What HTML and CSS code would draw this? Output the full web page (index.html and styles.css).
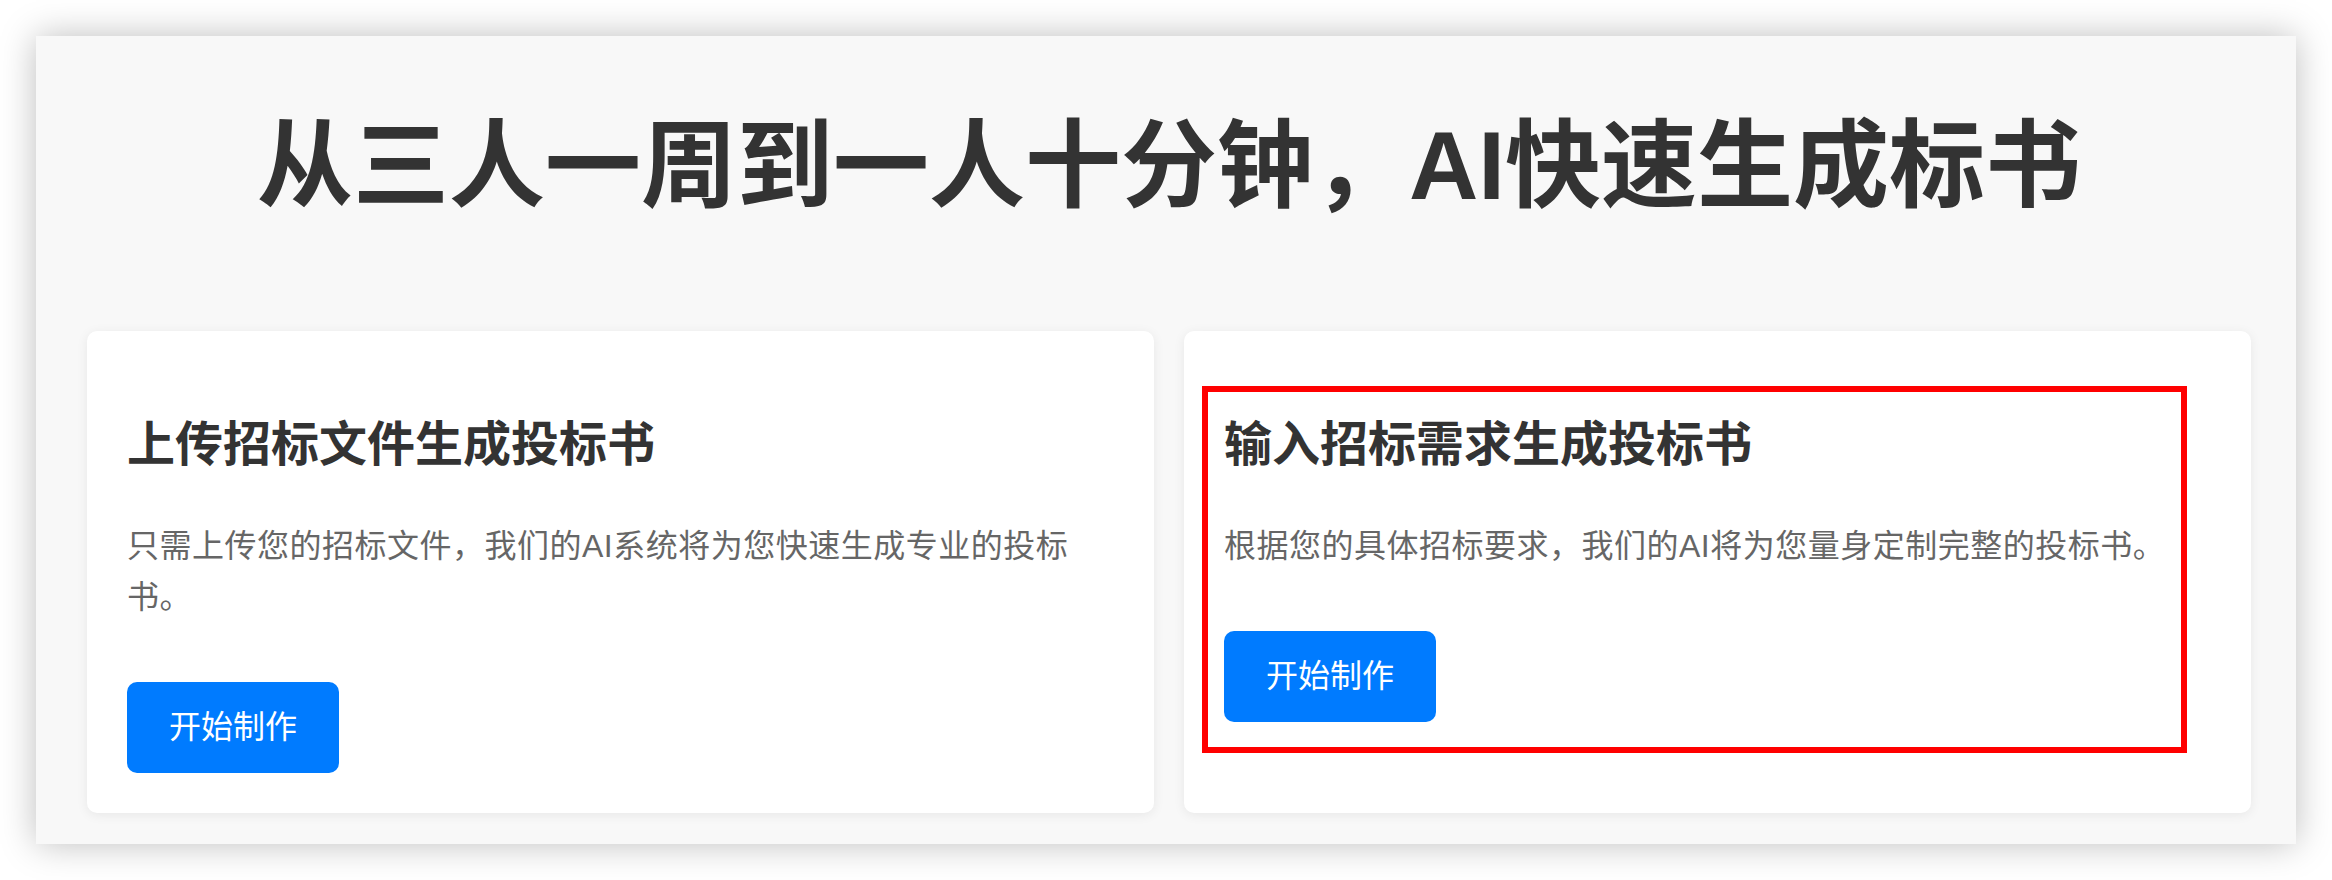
FILE: index.html
```html
<!DOCTYPE html>
<html>
<head>
	<meta charset="utf-8">
	<title>AI快速生成标书</title>
	<link rel="stylesheet" href="styles.css">
</head>
<body>
<div class="page">
	<h1 class="headline">从三人一周到一人十分钟，AI快速生成标书</h1>
	<div class="options">
		<div class="card">
			<h2>上传招标文件生成投标书</h2>
			<p>只需上传您的招标文件，我们的AI系统将为您快速生成专业的投标书。</p>
			<a class="btn" href="#">开始制作</a>
		</div>
		<div class="card">
			<div class="mark"></div>
			<h2>输入招标需求生成投标书</h2>
			<p>根据您的具体招标要求，我们的AI将为您量身定制完整的投标书。</p>
			<a class="btn" href="#">开始制作</a>
		</div>
	</div>
</div>
</body>
</html>
```

FILE: styles.css
```css
html, body, h1, h2, p{
	margin: 0;
	padding: 0;
}
body{
	background: #fff;
	font-family: "Liberation Sans", "Noto Sans CJK SC", sans-serif;
	color: #333;
}
.page{
	margin: 36px;
	height: 808px;
	box-sizing: border-box;
	padding: 72px 45px 31px 51px;
	background: #f8f8f8;
	box-shadow: 0 0 34px rgba(0, 0, 0, 0.26);
}
.headline{
	font-size: 96px;
	line-height: 115px;
	font-weight: bold;
	text-align: center;
	color: #333;
}
.options{
	display: flex;
	gap: 30px;
	margin-top: 108px;
}
.card{
	flex: 1;
	position: relative;
	display: flex;
	flex-direction: column;
	align-items: flex-start;
	padding: 85px 40px 40px;
	background: #fff;
	border-radius: 10px;
	box-shadow: 0 2px 12px rgba(0, 0, 0, 0.07);
}
.card h2{
	font-size: 48px;
	line-height: 57px;
	font-weight: bold;
	color: #333;
	margin-bottom: 48px;
}
.card p{
	font-size: 32px;
	line-height: 51px;
	letter-spacing: 0.5px;
	color: #666;
	margin-bottom: 59px;
}
.btn{
	display: block;
	padding: 21px 42px;
	font-size: 32px;
	line-height: 49px;
	color: #fff;
	background: #007bff;
	border-radius: 10px;
	text-decoration: none;
}
/* 标注框 */
.mark{
	position: absolute;
	left: 18px;
	top: 55px;
	width: 985px;
	height: 367px;
	box-sizing: border-box;
	border: 6px solid #f00;
	pointer-events: none;
}
```
